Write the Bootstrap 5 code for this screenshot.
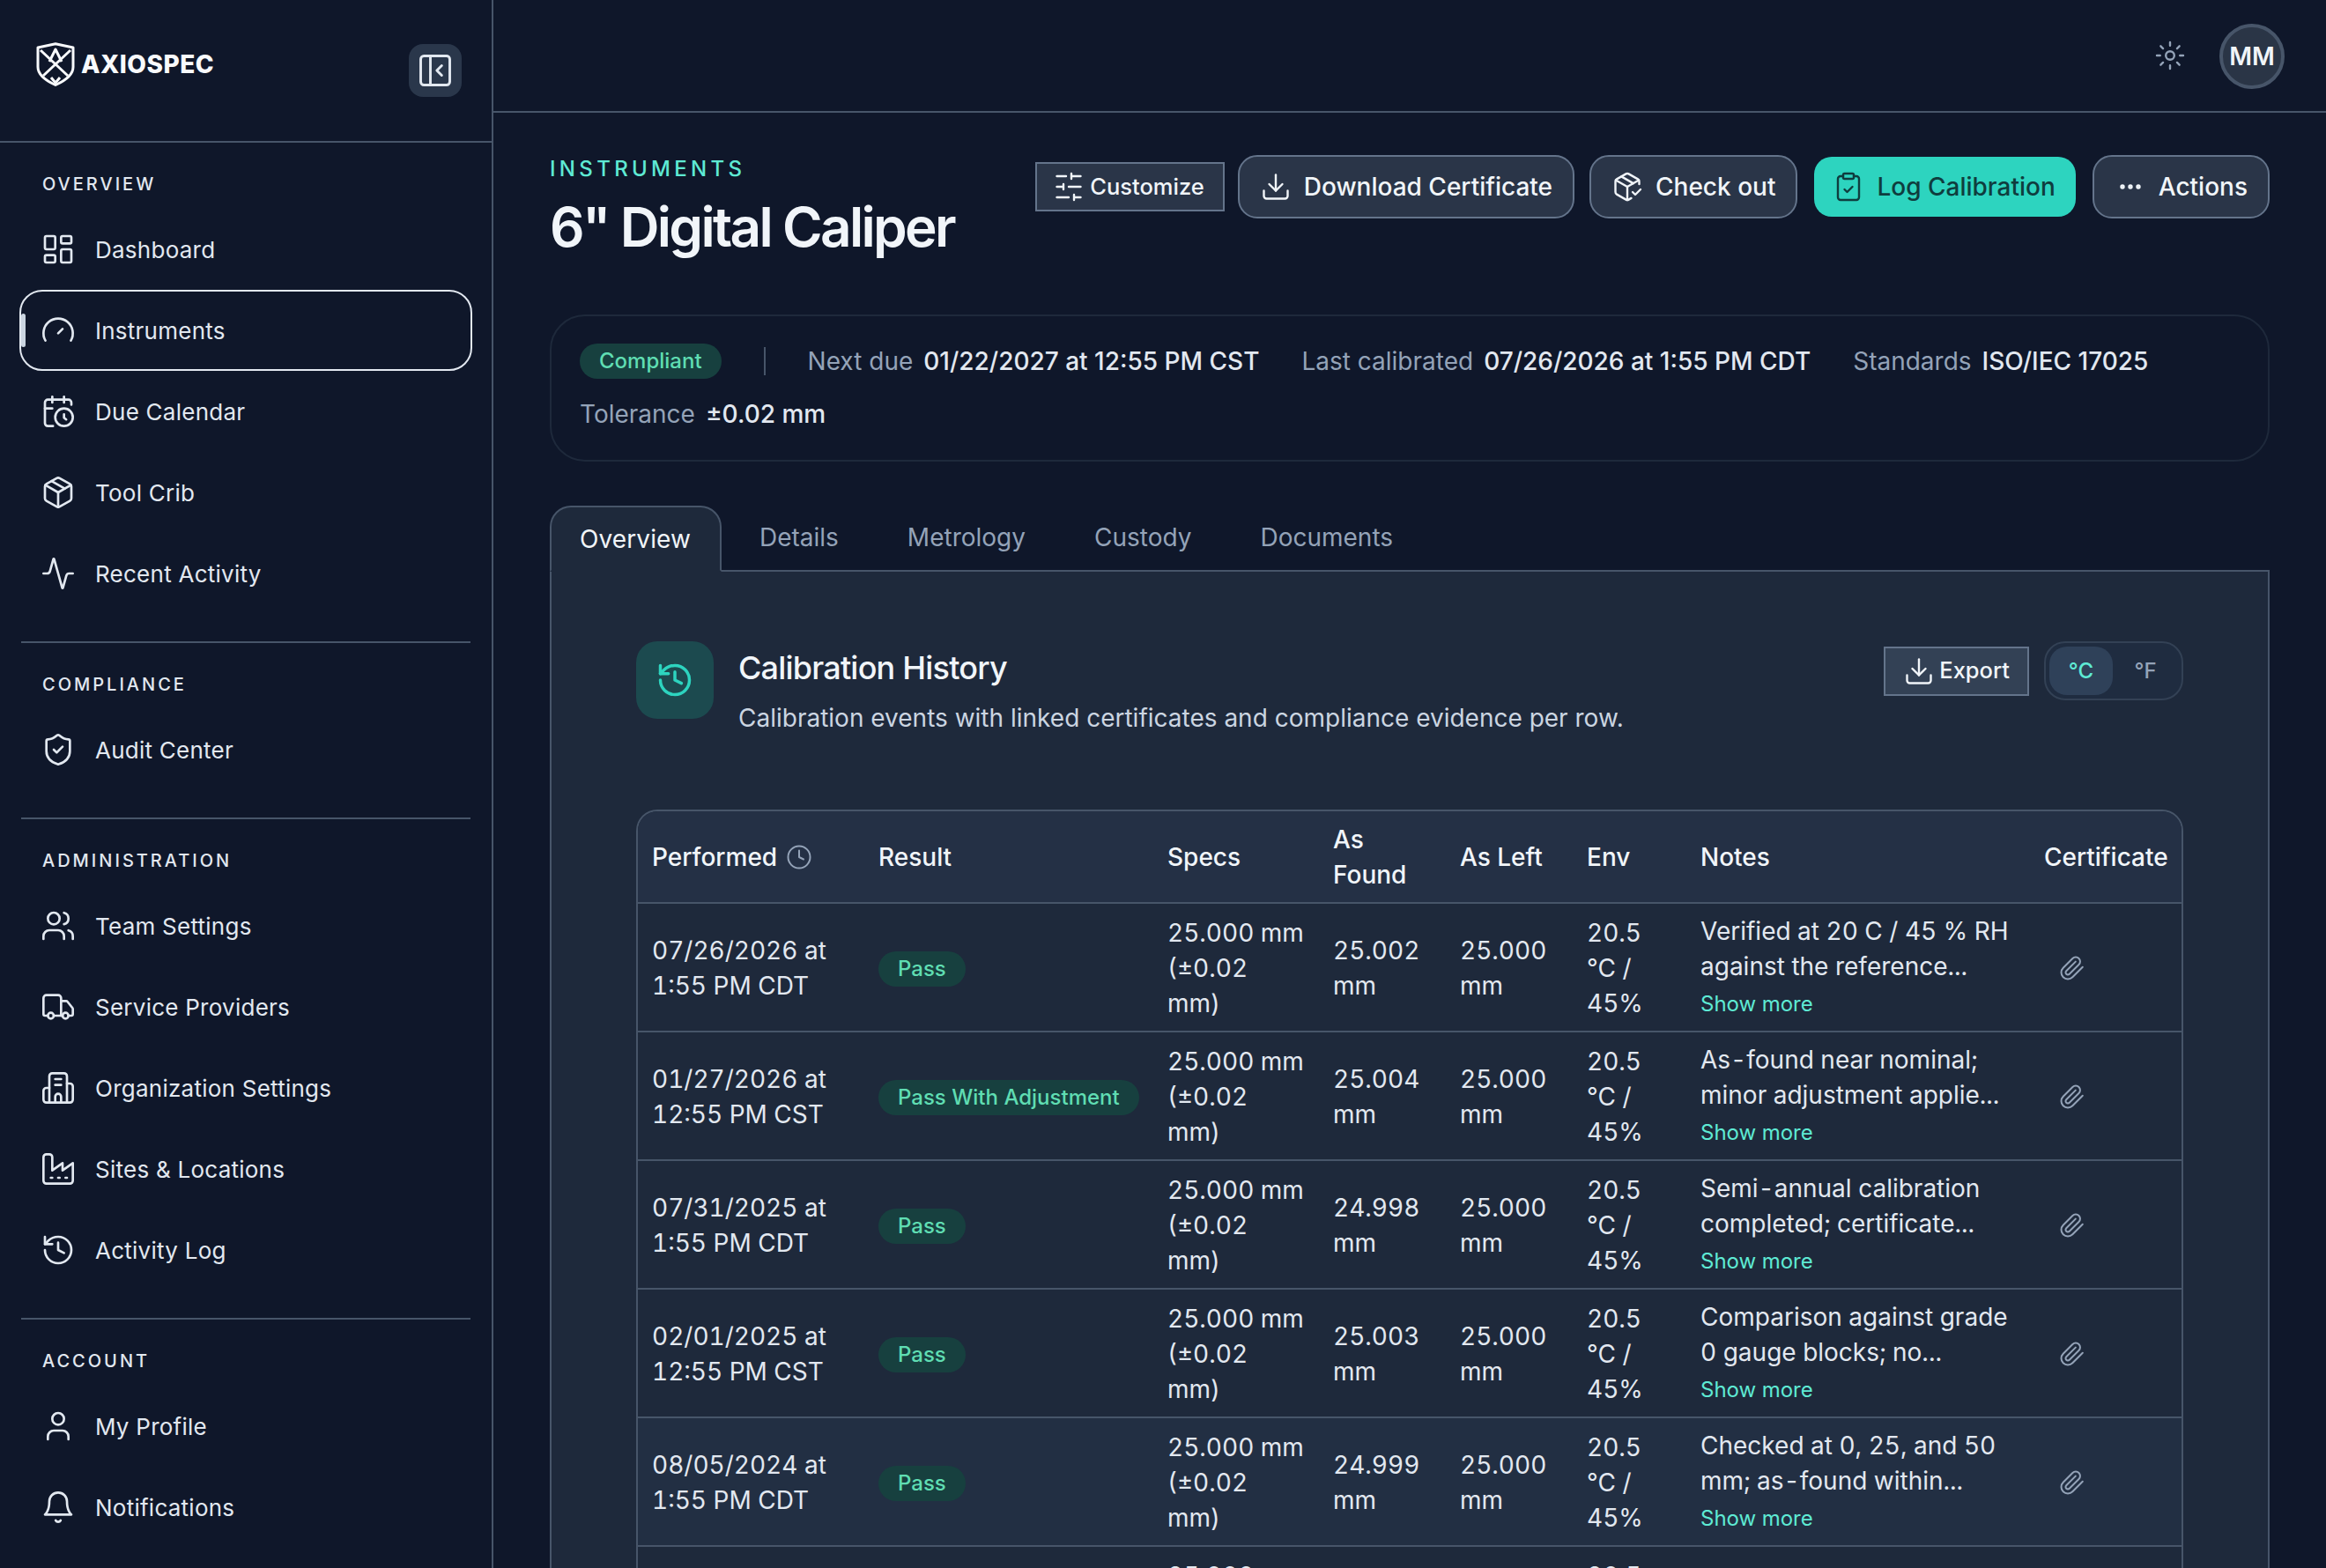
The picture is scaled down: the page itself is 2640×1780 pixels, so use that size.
<!doctype html>
<html lang="en">
<head>
<meta charset="utf-8">
<title>Axiospec</title>
<link href="https://cdn.jsdelivr.net/npm/bootstrap@5.3.0/dist/css/bootstrap.min.css" rel="stylesheet">
<style>
html,body{height:100%;overflow:hidden}
body{background:#0f172a;color:#e2e8f0;font-family:Inter,"Liberation Sans",sans-serif;font-size:28px}
.ico{fill:none;stroke:currentColor;stroke-width:1.6;stroke-linecap:round;stroke-linejoin:round;flex:none}
.shell{height:1780px;overflow:hidden}
.side{width:560px;flex:none;border-right:2px solid #475569;background:#0f172a;height:1780px;overflow:hidden}
.side-top{height:162px;border-bottom:2px solid #475569;padding:48px 34px 0 41px}
.logo-word{font-weight:800;font-size:28px;letter-spacing:.5px;color:#f8fafc;margin:9px 0 0 7px;line-height:32px}
.collapse-btn{width:60px;height:60px;border-radius:16px;background:#2a374b;border:0;color:#e2e8f0;margin-top:2px;padding:0}
.side-group{margin:0 24px 0 24px;padding:33px 0 31px;border-bottom:2px solid #475569}
.side-group:last-child{border-bottom:0}
.side-label{font-size:20px;line-height:28px;letter-spacing:.15em;font-weight:500;color:#e2e8f0;padding-left:24px;margin-bottom:14px}
.side-link{height:92px;display:flex;align-items:center;gap:22px;padding:0 0 0 22px;margin-left:-2px;margin-right:-2px;font-size:26px;letter-spacing:.25px;color:#e2e8f0;position:relative;border:2px solid transparent;border-radius:26px}
.side-link.active{border-color:#e2e8f0;color:#e2e8f0}
.side-link.active::before{content:"";position:absolute;left:0;top:25px;width:5px;height:38px;background:#cbd5e1;border-radius:3px}
.main-area{min-width:0;height:1780px;overflow:hidden}
.topbar{height:128px;border-bottom:2px solid #475569;padding:0 47px 0 0;gap:38px}
.sun-btn{color:#94a3b8;width:36px;height:36px}
.avatar-circle{width:74px;height:74px;border-radius:50%;background:#2a3546;border:4px solid #475569;font-size:28px;font-weight:600;color:#f1f5f9;margin-top:1px}
.page-wrap{padding:48px 64px 0}
.eyebrow{font-size:24px;line-height:30px;letter-spacing:.18em;font-weight:500;color:#5eead4;margin-top:1px}
.page-title{font-size:62px;line-height:72px;font-weight:600;letter-spacing:-.043em;color:#f1f5f9;margin:15px 0 0}
.act-btn{--bs-btn-font-size:28px;--bs-btn-font-weight:500;height:72px;padding:0 23px;display:inline-flex;align-items:center;gap:14px;border:2px solid #64748b;border-radius:22px;background:#2a3548;color:#f1f5f9;white-space:nowrap}
.act-btn.sq{height:56px;--bs-btn-font-size:25.500px;border-radius:0;padding:0 21px 0 18px;gap:6px;margin-right:-2px}
.act-btn.primary-act{background:#2dd4bf;background-clip:padding-box;border-color:transparent;color:#0f3d3e;padding-left:21px}
.act-gap{gap:17px}
.status-box{margin-top:63px;border:2px solid #1e293b;border-radius:40px;padding:31px 32px 32px;column-gap:48px;row-gap:20px;background:#0f172a}
.status-item{line-height:40px;gap:12px;color:#94a3b8;white-space:nowrap}
.status-item b{font-weight:500;color:#e2e8f0}
.pill-ok{font-size:24px;font-weight:500;line-height:40px;height:40px;padding:0 22px;background:#17403f;color:#5fddb2;--bs-badge-padding-x:22px;vertical-align:middle}
.vline{width:2px;height:32px;background:#475569;align-self:center}
.tabs-row{margin-top:50px;border-bottom:2px solid #475569;gap:8px;height:75px;--bs-nav-tabs-border-width:0}
.tabs-row .nav-link{height:73px;line-height:68px;padding:0 33px;font-size:28px;color:#94a3b8;border:2px solid transparent;border-radius:24px 24px 0 0;margin:0}
.tabs-row .nav-link.active{background:#1e293b;color:#f1f5f9;border-color:#475569;border-bottom-color:#1e293b;height:75px;padding:0 33px 0 32px;line-height:72px;letter-spacing:.1px}
.pane-box{background:#1e293b;border:2px solid #475569;border-width:0 2px;padding:79px 96px 0;height:1200px}
.head-gap{gap:28px}
.hist-icon{width:88px;height:88px;border-radius:24px;background:#1c4a4f;color:#2dd4bf}
.hist-icon .ico{stroke-width:1.9}
.hist-title{font-size:36px;line-height:48px;font-weight:500;letter-spacing:-.022em;color:#f1f5f9;margin:6px 0 13px}
.hist-sub{font-size:28px;line-height:40px;color:#cbd5e1}
.export-btn{height:56px;padding:0 20px;display:inline-flex;align-items:center;gap:5px;border:2px solid #64748b;border-radius:0;background:#334155;color:#f1f5f9;font-size:25.500px;font-weight:500}
.unit-toggle{border:2px solid #334155;border-radius:24px;background:#1f2c40;padding:4px;height:67px;width:158px}
.unit-toggle span{flex:1;text-align:center;line-height:55px;font-size:24px;font-weight:500;color:#94a3b8;border-radius:20px}
.unit-toggle span.on{background:#2f4159;color:#5eead4;flex:0 0 72px}
.table-box{margin-top:84px;border:2px solid #475569;border-bottom:0;border-radius:24px 24px 0 0;overflow:hidden}
.hist-table{table-layout:fixed;width:100%;margin:0;--bs-table-bg:transparent;--bs-table-color:#e2e8f0;font-size:28px;line-height:40px}
.hist-table th{background:#243045;font-weight:500;color:#f1f5f9;height:104px;padding:0 17px;vertical-align:middle;border-bottom:2px solid #475569}
.hist-table td{height:146px;padding:1px 17px 0;vertical-align:middle;border-bottom:2px solid #475569;background:#1e293b;color:#e2e8f0;font-variant-numeric:tabular-nums}
.hist-table td:nth-child(3){padding-right:14px}
.hist-table th:nth-child(-n+2),.hist-table td:nth-child(-n+2){padding-left:16px}
.hist-table tr.hover-row td{background:#222f43}
.hist-table th:nth-child(1){width:257px}
.hist-table th:nth-child(2){width:327px}
.hist-table th:nth-child(3){width:188px}
.hist-table th:nth-child(4){width:144px}
.hist-table th:nth-child(5){width:144px}
.hist-table th:nth-child(6){width:129px}
.hist-table th:nth-child(7){width:390px}
.clock-i{color:#94a3b8;vertical-align:-5px;margin-left:2px}
.show-more{display:block;font-size:24px;line-height:40px;color:#5eead4;text-decoration:none;margin-top:3px}
.clip-i{color:#94a3b8;margin-left:17px;display:block}
</style>
</head>
<body>
<svg class="d-none" xmlns="http://www.w3.org/2000/svg">
<symbol id="i-dash" viewBox="0 0 24 24"><rect x="3" y="3" width="7" height="9" rx="1"/><rect x="14" y="3" width="7" height="5" rx="1"/><rect x="14" y="12" width="7" height="9" rx="1"/><rect x="3" y="16" width="7" height="5" rx="1"/></symbol>
<symbol id="i-gauge" viewBox="0 0 24 24"><path d="m12 14 3-3"/><path d="M3.34 19a10 10 0 1 1 17.32 0"/></symbol>
<symbol id="i-cal" viewBox="0 0 24 24"><path d="M21 7.5V6a2 2 0 0 0-2-2H5a2 2 0 0 0-2 2v14a2 2 0 0 0 2 2h3.5"/><path d="M16 2v4"/><path d="M8 2v4"/><path d="M3 10h5"/><path d="M17.5 17.5 16 16.3V14"/><circle cx="16" cy="16" r="6"/></symbol>
<symbol id="i-box" viewBox="0 0 24 24"><path d="M11 21.73a2 2 0 0 0 2 0l7-4A2 2 0 0 0 21 16V8a2 2 0 0 0-1-1.73l-7-4a2 2 0 0 0-2 0l-7 4A2 2 0 0 0 3 8v8a2 2 0 0 0 1 1.73z"/><path d="M12 22V12"/><path d="m3.3 7 8.7 5 8.7-5"/><path d="m7.5 4.27 9 5.15"/></symbol>
<symbol id="i-pulse" viewBox="0 0 24 24"><path d="M22 12h-2.48a2 2 0 0 0-1.93 1.46l-2.35 8.36a.25.25 0 0 1-.48 0L9.24 2.18a.25.25 0 0 0-.48 0l-2.35 8.36A2 2 0 0 1 4.49 12H2"/></symbol>
<symbol id="i-shield" viewBox="0 0 24 24"><path d="M20 13c0 5-3.5 7.5-7.66 8.95a1 1 0 0 1-.67-.01C7.5 20.5 4 18 4 13V6a1 1 0 0 1 1-1c2 0 4.5-1.2 6.24-2.72a1.17 1.17 0 0 1 1.52 0C14.51 3.81 17 5 19 5a1 1 0 0 1 1 1z"/><path d="m9 12 2 2 4-4"/></symbol>
<symbol id="i-users" viewBox="0 0 24 24"><path d="M16 21v-2a4 4 0 0 0-4-4H6a4 4 0 0 0-4 4v2"/><circle cx="9" cy="7" r="4"/><path d="M22 21v-2a4 4 0 0 0-3-3.87"/><path d="M16 3.13a4 4 0 0 1 0 7.75"/></symbol>
<symbol id="i-truck" viewBox="0 0 24 24"><path d="M14 18V6a2 2 0 0 0-2-2H4a2 2 0 0 0-2 2v11a1 1 0 0 0 1 1h2"/><path d="M15 18H9"/><path d="M19 18h2a1 1 0 0 0 1-1v-3.65a1 1 0 0 0-.22-.624l-3.48-4.35A1 1 0 0 0 17.52 8H14"/><circle cx="17" cy="18" r="2"/><circle cx="7" cy="18" r="2"/></symbol>
<symbol id="i-org" viewBox="0 0 24 24"><path d="M6 22V4a2 2 0 0 1 2-2h8a2 2 0 0 1 2 2v18Z"/><path d="M6 12H4a2 2 0 0 0-2 2v6a2 2 0 0 0 2 2h2"/><path d="M18 9h2a2 2 0 0 1 2 2v9a2 2 0 0 1-2 2h-2"/><path d="M10 6h4"/><path d="M10 10h4"/><path d="M10 22v-4a2 2 0 0 1 4 0v4"/></symbol>
<symbol id="i-factory" viewBox="0 0 24 24"><path d="M2 20a2 2 0 0 0 2 2h16a2 2 0 0 0 2-2V8l-7 5V8l-7 5V4a2 2 0 0 0-2-2H4a2 2 0 0 0-2 2Z"/><path d="M17 18h1"/><path d="M12 18h1"/><path d="M7 18h1"/></symbol>
<symbol id="i-history" viewBox="0 0 24 24"><path d="M3 12a9 9 0 1 0 9-9 9.75 9.75 0 0 0-6.74 2.74L3 8"/><path d="M3 3v5h5"/><path d="M12 7v5l4 2"/></symbol>
<symbol id="i-user" viewBox="0 0 24 24"><path d="M19 21v-2a4 4 0 0 0-4-4H9a4 4 0 0 0-4 4v2"/><circle cx="12" cy="7" r="4"/></symbol>
<symbol id="i-bell" viewBox="0 0 24 24"><path d="M6 8a6 6 0 0 1 12 0c0 7 3 9 3 9H3s3-2 3-9"/><path d="M10.3 21a1.94 1.94 0 0 0 3.4 0"/></symbol>
<symbol id="i-sliders" viewBox="0 0 24 24"><path d="M21 4h-7M10 4H3M21 12h-9M8 12H3M21 20h-5M12 20H3M14 2v4M8 10v4M16 18v4"/></symbol>
<symbol id="i-down" viewBox="0 0 24 24"><path d="M21 15v4a2 2 0 0 1-2 2H5a2 2 0 0 1-2-2v-4"/><path d="m7 10 5 5 5-5"/><path d="M12 15V3"/></symbol>
<symbol id="i-pkgcheck" viewBox="0 0 24 24"><path d="m16 16 2 2 4-4"/><path d="M21 10V8a2 2 0 0 0-1-1.73l-7-4a2 2 0 0 0-2 0l-7 4A2 2 0 0 0 3 8v8a2 2 0 0 0 1 1.73l7 4a2 2 0 0 0 2 0l2-1.14"/><path d="m7.5 4.27 9 5.15"/><path d="M3.29 7 12 12l8.71-5"/><path d="M12 22V12"/></symbol>
<symbol id="i-clip" viewBox="0 0 24 24"><rect x="8" y="2" width="8" height="4" rx="1"/><path d="M16 4h2a2 2 0 0 1 2 2v14a2 2 0 0 1-2 2H6a2 2 0 0 1-2-2V6a2 2 0 0 1 2-2h2"/><path d="m9 14 2 2 4-4"/></symbol>
<symbol id="i-sun" viewBox="0 0 24 24"><circle cx="12" cy="12" r="3.2"/><path d="M12 2v2.5M12 19.500V22M4.900 4.900l1.800 1.800M17.300 17.300l1.800 1.800M2 12h2.500M19.500 12H22M6.700 17.300l-1.800 1.800M19.100 4.900l-1.800 1.800"/></symbol>
<symbol id="i-clock" viewBox="0 0 24 24"><circle cx="12" cy="12" r="10"/><path d="M12 6v6l4 2"/></symbol>
<symbol id="i-paper" viewBox="0 0 24 24"><path d="m21.44 11.05-9.19 9.19a6 6 0 0 1-8.49-8.49l8.57-8.57A4 4 0 1 1 18 8.84l-8.59 8.57a2 2 0 0 1-2.83-2.83l8.49-8.48"/></symbol>
<symbol id="i-panel" viewBox="0 0 24 24"><rect x="3" y="3" width="18" height="18" rx="2"/><path d="M9 3v18"/><path d="m16 15-3-3 3-3"/></symbol>
</svg>

<div class="shell d-flex">
  <aside class="side">
    <div class="side-top d-flex justify-content-between align-items-start">
      <div class="d-flex align-items-start">
        <svg width="44" height="50" viewBox="0 0 44 50" fill="none" stroke="#f8fafc" stroke-width="3" stroke-linejoin="round"><path d="M2 6 22 1.800 42 6V28C42 38 32 44 22 48.500 12 44 2 38 2 28Z"/><path d="M5 9 36 38M39 9 8 38M15 22 22 8 29 22M17 40 22 46 27 40"/></svg>
        <div class="logo-word">AXIOSPEC</div>
      </div>
      <button class="collapse-btn btn d-flex align-items-center justify-content-center" type="button" aria-label="Collapse"><svg class="ico" width="44" height="44"><use href="#i-panel"/></svg></button>
    </div>

    <div class="side-group">
      <div class="side-label">OVERVIEW</div>
      <nav class="nav flex-column">
        <a class="side-link text-decoration-none" href="#"><svg class="ico" width="40" height="40"><use href="#i-dash"/></svg>Dashboard</a>
        <a class="side-link active text-decoration-none" href="#"><svg class="ico" width="40" height="40"><use href="#i-gauge"/></svg>Instruments</a>
        <a class="side-link text-decoration-none" href="#"><svg class="ico" width="40" height="40"><use href="#i-cal"/></svg>Due Calendar</a>
        <a class="side-link text-decoration-none" href="#"><svg class="ico" width="40" height="40"><use href="#i-box"/></svg>Tool Crib</a>
        <a class="side-link text-decoration-none" href="#"><svg class="ico" width="40" height="40"><use href="#i-pulse"/></svg>Recent Activity</a>
      </nav>
    </div>
    <div class="side-group">
      <div class="side-label">COMPLIANCE</div>
      <nav class="nav flex-column">
        <a class="side-link text-decoration-none" href="#"><svg class="ico" width="40" height="40"><use href="#i-shield"/></svg>Audit Center</a>
      </nav>
    </div>
    <div class="side-group">
      <div class="side-label">ADMINISTRATION</div>
      <nav class="nav flex-column">
        <a class="side-link text-decoration-none" href="#"><svg class="ico" width="40" height="40"><use href="#i-users"/></svg>Team Settings</a>
        <a class="side-link text-decoration-none" href="#"><svg class="ico" width="40" height="40"><use href="#i-truck"/></svg>Service Providers</a>
        <a class="side-link text-decoration-none" href="#"><svg class="ico" width="40" height="40"><use href="#i-org"/></svg>Organization Settings</a>
        <a class="side-link text-decoration-none" href="#"><svg class="ico" width="40" height="40"><use href="#i-factory"/></svg>Sites &amp; Locations</a>
        <a class="side-link text-decoration-none" href="#"><svg class="ico" width="40" height="40"><use href="#i-history"/></svg>Activity Log</a>
      </nav>
    </div>
    <div class="side-group">
      <div class="side-label">ACCOUNT</div>
      <nav class="nav flex-column">
        <a class="side-link text-decoration-none" href="#"><svg class="ico" width="40" height="40"><use href="#i-user"/></svg>My Profile</a>
        <a class="side-link text-decoration-none" href="#"><svg class="ico" width="40" height="40"><use href="#i-bell"/></svg>Notifications</a>
      </nav>
    </div>
  </aside>

  <main class="main-area flex-grow-1">
    <div class="topbar d-flex justify-content-end align-items-center">
      <svg class="ico sun-btn" width="36" height="36"><use href="#i-sun"/></svg>
      <div class="avatar-circle d-flex align-items-center justify-content-center">MM</div>
    </div>

    <div class="page-wrap">
      <div class="d-flex justify-content-between align-items-start">
        <div>
          <div class="eyebrow">INSTRUMENTS</div>
          <h1 class="page-title">6" Digital Caliper</h1>
        </div>
        <div class="d-flex align-items-center act-gap">
          <button class="btn act-btn sq" type="button"><svg class="ico" width="36" height="36"><use href="#i-sliders"/></svg>Customize</button>
          <button class="btn act-btn" type="button"><svg class="ico" width="36" height="36"><use href="#i-down"/></svg>Download Certificate</button>
          <button class="btn act-btn" type="button"><svg class="ico" width="36" height="36"><use href="#i-pkgcheck"/></svg>Check out</button>
          <button class="btn act-btn primary-act" type="button"><svg class="ico" width="36" height="36"><use href="#i-clip"/></svg>Log Calibration</button>
          <button class="btn act-btn" type="button"><svg class="ico" width="36" height="36" viewBox="0 0 24 24"><circle cx="6" cy="12" r="1"/><circle cx="12" cy="12" r="1"/><circle cx="18" cy="12" r="1"/></svg>Actions</button>
        </div>
      </div>

      <div class="status-box d-flex flex-wrap align-items-center">
        <span class="badge rounded-pill pill-ok">Compliant</span>
        <span class="vline"></span>
        <span class="status-item d-flex">Next due <b>01/22/2027 at 12:55 PM CST</b></span>
        <span class="status-item d-flex">Last calibrated <b>07/26/2026 at 1:55 PM CDT</b></span>
        <span class="status-item d-flex">Standards <b>ISO/IEC 17025</b></span>
        <span class="status-item d-flex">Tolerance <b>±0.02 mm</b></span>
      </div>

      <ul class="nav nav-tabs tabs-row">
        <li class="nav-item"><a class="nav-link active" href="#">Overview</a></li>
        <li class="nav-item"><a class="nav-link" href="#">Details</a></li>
        <li class="nav-item"><a class="nav-link" href="#">Metrology</a></li>
        <li class="nav-item"><a class="nav-link" href="#">Custody</a></li>
        <li class="nav-item"><a class="nav-link" href="#">Documents</a></li>
      </ul>

      <div class="pane-box">
        <div class="d-flex justify-content-between align-items-start">
          <div class="d-flex head-gap">
            <div class="hist-icon d-flex align-items-center justify-content-center"><svg class="ico" width="44" height="44"><use href="#i-history"/></svg></div>
            <div>
              <h2 class="hist-title">Calibration History</h2>
              <div class="hist-sub">Calibration events with linked certificates and compliance evidence per row.</div>
            </div>
          </div>
          <div class="d-flex align-items-center act-gap">
            <button class="btn export-btn" type="button"><svg class="ico" width="36" height="36"><use href="#i-down"/></svg>Export</button>
            <div class="unit-toggle d-flex"><span class="on">°C</span><span>°F</span></div>
          </div>
        </div>

        <div class="table-box">
          <table class="table hist-table">
            <thead>
              <tr>
                <th>Performed <svg class="ico clock-i" width="30" height="30"><use href="#i-clock"/></svg></th>
                <th>Result</th><th>Specs</th><th>As Found</th><th>As Left</th><th>Env</th><th>Notes</th><th>Certificate</th>
              </tr>
            </thead>
            <tbody>
              <tr>
                <td>07/26/2026 at 1:55 PM CDT</td>
                <td><span class="badge rounded-pill pill-ok">Pass</span></td>
                <td>25.000 mm (±0.02 mm)</td><td>25.002 mm</td><td>25.000 mm</td><td>20.5 °C / 45%</td>
                <td>Verified at 20 C / 45 % RH against the reference...<a class="show-more" href="#">Show more</a></td>
                <td><svg class="ico clip-i" width="30" height="30"><use href="#i-paper"/></svg></td>
              </tr>
              <tr>
                <td>01/27/2026 at 12:55 PM CST</td>
                <td><span class="badge rounded-pill pill-ok">Pass With Adjustment</span></td>
                <td>25.000 mm (±0.02 mm)</td><td>25.004 mm</td><td>25.000 mm</td><td>20.5 °C / 45%</td>
                <td>As-found near nominal; minor adjustment applie...<a class="show-more" href="#">Show more</a></td>
                <td><svg class="ico clip-i" width="30" height="30"><use href="#i-paper"/></svg></td>
              </tr>
              <tr>
                <td>07/31/2025 at 1:55 PM CDT</td>
                <td><span class="badge rounded-pill pill-ok">Pass</span></td>
                <td>25.000 mm (±0.02 mm)</td><td>24.998 mm</td><td>25.000 mm</td><td>20.5 °C / 45%</td>
                <td>Semi-annual calibration completed; certificate...<a class="show-more" href="#">Show more</a></td>
                <td><svg class="ico clip-i" width="30" height="30"><use href="#i-paper"/></svg></td>
              </tr>
              <tr>
                <td>02/01/2025 at 12:55 PM CST</td>
                <td><span class="badge rounded-pill pill-ok">Pass</span></td>
                <td>25.000 mm (±0.02 mm)</td><td>25.003 mm</td><td>25.000 mm</td><td>20.5 °C / 45%</td>
                <td>Comparison against grade 0 gauge blocks; no...<a class="show-more" href="#">Show more</a></td>
                <td><svg class="ico clip-i" width="30" height="30"><use href="#i-paper"/></svg></td>
              </tr>
              <tr class="hover-row">
                <td>08/05/2024 at 1:55 PM CDT</td>
                <td><span class="badge rounded-pill pill-ok">Pass</span></td>
                <td>25.000 mm (±0.02 mm)</td><td>24.999 mm</td><td>25.000 mm</td><td>20.5 °C / 45%</td>
                <td>Checked at 0, 25, and 50 mm; as-found within...<a class="show-more" href="#">Show more</a></td>
                <td><svg class="ico clip-i" width="30" height="30"><use href="#i-paper"/></svg></td>
              </tr>
              <tr>
                <td></td><td></td>
                <td>25.000 mm (±0.02 mm)</td><td></td><td></td><td>20.5 °C / 45%</td>
                <td>Routine 6-month</td><td></td>
              </tr>
            </tbody>
          </table>
        </div>
      </div>
    </div>
  </main>
</div>
<script src="https://cdn.jsdelivr.net/npm/bootstrap@5.3.0/dist/js/bootstrap.bundle.min.js"></script>
</body>
</html>
